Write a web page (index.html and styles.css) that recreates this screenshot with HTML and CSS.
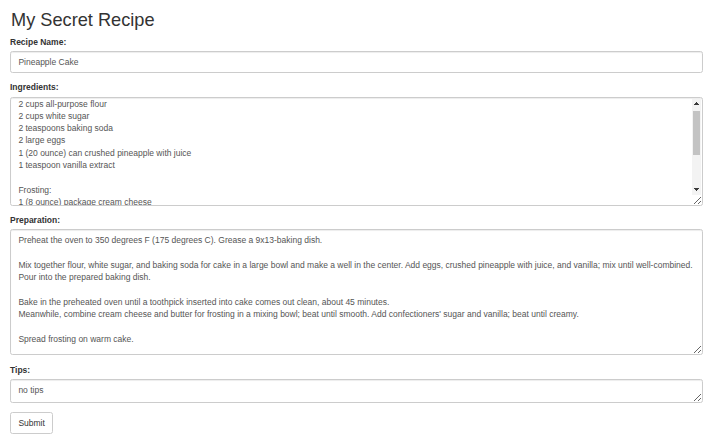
FILE: index.html
```
<!DOCTYPE html>
<html>
<head>
<meta charset="utf-8">
<title>My Secret Recipe</title>
<link rel="stylesheet" href="styles.css">
</head>
<body>
<div class="page">
  <h1 class="title">My Secret Recipe</h1>
  <form class="recipe-form" onsubmit="return false">
    <div class="form-group">
      <label class="label" for="name">Recipe Name:</label>
      <input class="control" id="name" type="text" value="Pineapple Cake">
    </div>
    <div class="form-group">
      <label class="label" for="ingredients">Ingredients:</label>
      <div class="area-wrap">
        <textarea class="control area area-ingredients" id="ingredients">Cake:
2 cups all-purpose flour
2 cups white sugar
2 teaspoons baking soda
2 large eggs
1 (20 ounce) can crushed pineapple with juice
1 teaspoon vanilla extract

Frosting:
1 (8 ounce) package cream cheese
1/2 cup butter, softened
3 1/2 cups confectioners' sugar
1 teaspoon vanilla extract
1 cup chopped walnuts</textarea>
        <div class="fake-scroll" aria-hidden="true">
          <div class="sb-btn sb-up"></div>
          <div class="sb-track"><div class="sb-thumb"></div></div>
          <div class="sb-btn sb-down"></div>
        </div>
      </div>
    </div>
    <div class="form-group">
      <label class="label" for="prep">Preparation:</label>
      <textarea class="control area area-prep" id="prep" wrap="off">Preheat the oven to 350 degrees F (175 degrees C). Grease a 9x13-baking dish.

Mix together flour, white sugar, and baking soda for cake in a large bowl and make a well in the center. Add eggs, crushed pineapple with juice, and vanilla; mix until well-combined.
Pour into the prepared baking dish.

Bake in the preheated oven until a toothpick inserted into cake comes out clean, about 45 minutes.
Meanwhile, combine cream cheese and butter for frosting in a mixing bowl; beat until smooth. Add confectioners' sugar and vanilla; beat until creamy.

Spread frosting on warm cake.</textarea>
    </div>
    <div class="form-group">
      <label class="label" for="tips">Tips:</label>
      <textarea class="control area area-tips" id="tips">no tips</textarea>
    </div>
    <button class="btn" type="submit">Submit</button>
  </form>
</div>
<script src="script.js"></script>
</body>
</html>
```
FILE: styles.css
```
html, body {
  margin: 0;
  padding: 0;
  background: #fff;
}
body {
  font-family: "Liberation Sans", Arial, sans-serif;
  font-size: 8.5px;
  line-height: 12.3px;
  color: #333;
}
.page {
  padding: 10px 17px 0 10px;
}
.title {
  margin: 0 0 4px 1px;
  font-size: 18.2px;
  line-height: 21.5px;
  font-weight: normal;
  color: #333;
}
.form-group {
  margin-bottom: 8.5px;
}
.label {
  display: block;
  font-weight: bold;
  margin-bottom: 3.1px;
  line-height: 12.3px;
}
.control {
  display: block;
  box-sizing: border-box;
  width: 100%;
  height: 21.8px;
  margin: 0;
  padding: 3.7px 7.4px;
  font-family: "Liberation Sans", Arial, sans-serif;
  font-size: 8.5px;
  line-height: 12.3px;
  color: #555;
  background: #fff;
  border: 1px solid #ccc;
  border-radius: 2.5px;
  box-shadow: inset 0 1px 1px rgba(0,0,0,.075);
  outline: none;
}
.area {
  resize: vertical;
}
.area-wrap {
  position: relative;
}
.area-ingredients {
  height: 109px;
  padding-right: 14px;
}
.area-prep {
  height: 126px;
  padding-right: 0;
  overflow: hidden;
}
.area-tips {
  height: 24px;
  overflow: hidden;
}
.fake-scroll {
  position: absolute;
  top: 2px;
  right: 2px;
  width: 9px;
  height: 96px;
  display: flex;
  flex-direction: column;
  background: #f3f3f3;
}
.sb-btn {
  height: 10px;
  flex: none;
  background-repeat: no-repeat;
  background-size: 5px 3px;
  background-position: center;
}
.sb-up {
  background-image: conic-gradient(from 135deg at 50% 0, #3a3a3a 90deg, transparent 90deg);
}
.sb-down {
  background-image: conic-gradient(from -45deg at 50% 100%, #3a3a3a 90deg, transparent 90deg);
}
.sb-track {
  flex: 1;
  padding: 2.5px 1px 0;
}
.sb-thumb {
  height: 44px;
  background: #c3c3c3;
}
.btn {
  display: inline-block;
  margin: 0;
  padding: 3.7px 7.4px;
  font-family: "Liberation Sans", Arial, sans-serif;
  font-size: 8.5px;
  line-height: 12.3px;
  color: #333;
  background: #fff;
  border: 1px solid #ccc;
  border-radius: 2.5px;
  cursor: pointer;
}
```
FILE: script.js
```
document.getElementById('ingredients').scrollTop = 16;
```
